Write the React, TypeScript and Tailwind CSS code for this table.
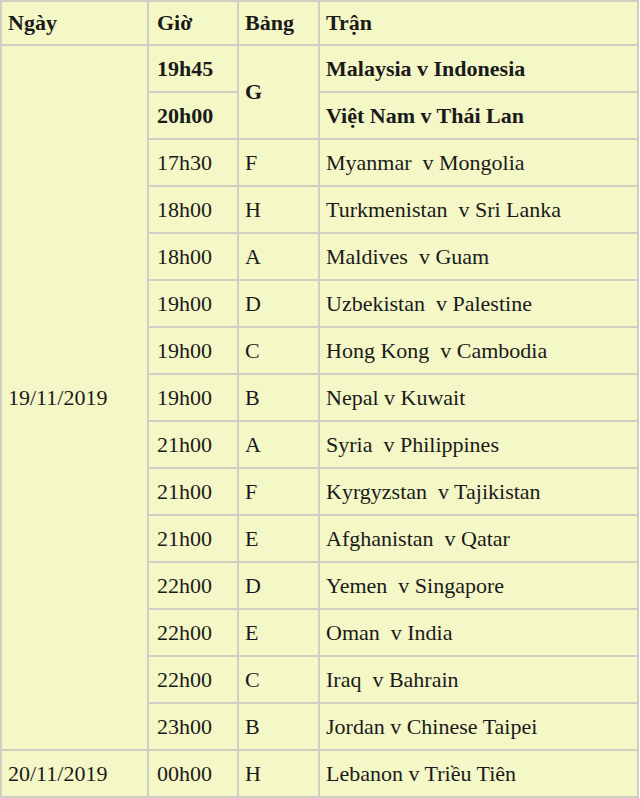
const rows: { time: string; group: string; match: string }[] = [
  { time: "17h30", group: "F", match: "Myanmar\u00a0 v Mongolia" },
  { time: "18h00", group: "H", match: "Turkmenistan\u00a0 v Sri Lanka" },
  { time: "18h00", group: "A", match: "Maldives\u00a0 v Guam" },
  { time: "19h00", group: "D", match: "Uzbekistan\u00a0 v Palestine" },
  { time: "19h00", group: "C", match: "Hong Kong\u00a0 v Cambodia" },
  { time: "19h00", group: "B", match: "Nepal v Kuwait" },
  { time: "21h00", group: "A", match: "Syria\u00a0 v Philippines" },
  { time: "21h00", group: "F", match: "Kyrgyzstan\u00a0 v Tajikistan" },
  { time: "21h00", group: "E", match: "Afghanistan\u00a0 v Qatar" },
  { time: "22h00", group: "D", match: "Yemen\u00a0 v Singapore" },
  { time: "22h00", group: "E", match: "Oman\u00a0 v India" },
  { time: "22h00", group: "C", match: "Iraq\u00a0 v Bahrain" },
  { time: "23h00", group: "B", match: "Jordan v Chinese Taipei" },
];

const cell = "border-2 border-[#cfcfc4] px-[6px] py-0 align-middle";
const td = cell + " h-[47px]";
const th = cell + " h-[44px]";

export default function App() {
  return (
    <div className="w-[640px] bg-white">
      <table className="w-[639px] table-fixed border-collapse bg-[#f4f7c6] text-[#1a1a1a] text-[22px] leading-none font-['Liberation_Serif',serif]">
        <colgroup>
          <col className="w-[147px]" />
          <col className="w-[90px]" />
          <col className="w-[81px]" />
          <col />
        </colgroup>
        <tbody>
          <tr className="font-bold">
            <td className={th}>Ngày</td>
            <td className={th + " pl-[8px]"}>Giờ</td>
            <td className={th}>Bảng</td>
            <td className={th}>Trận</td>
          </tr>
          <tr className="font-bold">
            <td className={td} rowSpan={15}>
              <span className="font-normal">19/11/2019</span>
            </td>
            <td className={td + " pl-[8px]"}>19h45</td>
            <td className={td} rowSpan={2}>G</td>
            <td className={td}>Malaysia v Indonesia</td>
          </tr>
          <tr className="font-bold">
            <td className={td + " pl-[8px]"}>20h00</td>
            <td className={td}>Việt Nam v Thái Lan</td>
          </tr>
          {rows.map((r, i) => (
            <tr key={i}>
              <td className={td + " pl-[8px]"}>{r.time}</td>
              <td className={td}>{r.group}</td>
              <td className={td}>{r.match}</td>
            </tr>
          ))}
          <tr>
            <td className={td}>20/11/2019</td>
            <td className={td + " pl-[8px]"}>00h00</td>
            <td className={td}>H</td>
            <td className={td}>Lebanon v Triều Tiên</td>
          </tr>
        </tbody>
      </table>
    </div>
  );
}
